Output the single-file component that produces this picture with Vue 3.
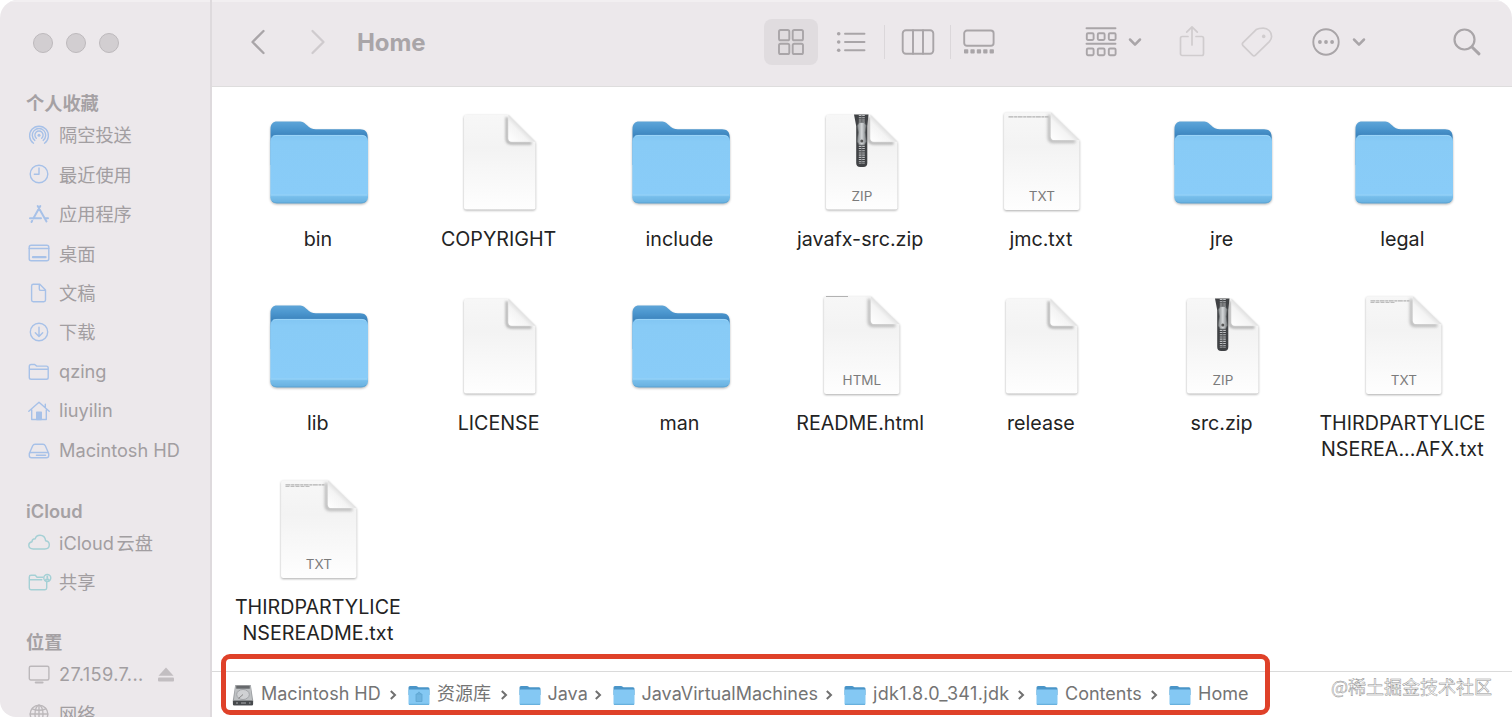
<template>
  <div class="window">
    <svg class="defs" width="0" height="0" aria-hidden="true">
      <defs>
        <linearGradient id="folderBack" x1="0" y1="0" x2="0" y2="1">
          <stop offset="0" stop-color="#5ea5d8" />
          <stop offset="0.16" stop-color="#4c97cf" />
          <stop offset="0.3" stop-color="#3f87c0" />
          <stop offset="1" stop-color="#4794cf" />
        </linearGradient>
        <linearGradient id="folderFront" x1="0" y1="0" x2="0" y2="1">
          <stop offset="0" stop-color="#82c6f3" />
          <stop offset="0.1" stop-color="#88cbf6" />
          <stop offset="0.86" stop-color="#89ccf8" />
          <stop offset="0.91" stop-color="#76bdea" />
          <stop offset="1" stop-color="#68b0df" />
        </linearGradient>
        <linearGradient id="paper" x1="0" y1="0" x2="0" y2="1">
          <stop offset="0" stop-color="#f7f7f7" />
          <stop offset="0.35" stop-color="#f3f3f3" />
          <stop offset="1" stop-color="#fefefe" />
        </linearGradient>
        <linearGradient id="fold" x1="0" y1="1" x2="1" y2="0">
          <stop offset="0" stop-color="#ffffff" />
          <stop offset="0.38" stop-color="#f4f4f4" />
          <stop offset="0.52" stop-color="#dedede" />
        </linearGradient>
        <linearGradient id="pull" x1="0" y1="0" x2="1" y2="0">
          <stop offset="0" stop-color="#85898b" />
          <stop offset="0.5" stop-color="#d4d7d9" />
          <stop offset="1" stop-color="#777b7e" />
        </linearGradient>
        <filter id="soft" x="-20%" y="-20%" width="140%" height="140%">
          <feGaussianBlur stdDeviation="1.3" />
        </filter>
      </defs>
    </svg>

    <aside class="sidebar">
      <div class="lights"><i></i><i></i><i></i></div>
      <section v-for="group in groups" :key="group.title" class="group">
        <h3>{{ group.title }}</h3>
        <div v-for="item in group.items" :key="item.name" class="side-row" :class="group.tone">
          <svg class="side-icon" viewBox="0 0 24 24" v-html="sideIcons[item.icon]"></svg>
          <span class="side-name" :class="{ wide: item.eject, mixed: item.icon === 'cloud' }">{{ item.name }}</span>
          <svg v-if="item.eject" class="eject" viewBox="0 0 16 15">
            <path d="M8 0.5 15.5 8.8H.5z" /><rect x="0" y="10.5" width="16" height="4" rx="1" />
          </svg>
        </div>
      </section>
    </aside>

    <main class="main">
      <header class="toolbar">
        <svg class="back" viewBox="0 0 16 26"><path d="M13.5 2 2.5 13l11 11" /></svg>
        <svg class="forward" viewBox="0 0 16 26"><path d="M2.5 2l11 11-11 11" /></svg>
        <h1>Home</h1>
        <div class="views">
          <div class="view active">
            <svg width="28" height="28" viewBox="0 0 28 28">
              <rect x="2" y="2" width="10.3" height="10.3" rx="1.6" /><rect x="15.7" y="2" width="10.3" height="10.3" rx="1.6" />
              <rect x="2" y="15.7" width="10.3" height="10.3" rx="1.6" /><rect x="15.7" y="15.7" width="10.3" height="10.3" rx="1.6" />
            </svg>
          </div>
          <div class="view list">
            <svg width="30" height="22" viewBox="0 0 30 22">
              <path d="M9 2.7h19.5M9 11h19.5M9 19.3h19.5" />
              <g class="solid"><circle cx="2.7" cy="2.7" r="1.8" /><circle cx="2.7" cy="11" r="1.8" /><circle cx="2.7" cy="19.3" r="1.8" /></g>
            </svg>
          </div>
          <i class="divider"></i>
          <div class="view columns">
            <svg width="34" height="28" viewBox="0 0 34 28"><rect x="1.7" y="2.2" width="30.6" height="23.6" rx="3.2" /><path d="M12 2.2v23.6M22 2.2v23.6" /></svg>
          </div>
          <i class="divider"></i>
          <div class="view gallery">
            <svg width="34" height="28" viewBox="0 0 34 28">
              <rect x="2.2" y="2.5" width="29.4" height="15.3" rx="2.8" />
              <g class="solid"><rect v-for="n in 5" :key="n" :x="n * 6.4 - 4.4" y="21.2" width="4.3" height="4.3" rx="0.8" /></g>
            </svg>
          </div>
        </div>
        <svg class="tool group-by" viewBox="0 0 32 32">
          <path d="M1.5 2.2h29M1.5 17.8h29" />
          <template v-for="n in 3" :key="n">
            <rect :x="n * 11 - 9.2" y="7.2" width="6.8" height="6.8" rx="1.2" />
            <rect :x="n * 11 - 9.2" y="22.5" width="6.8" height="6.8" rx="1.2" />
          </template>
        </svg>
        <svg class="tool chevron" viewBox="0 0 14 10"><path d="M2 2.5 7 7.6l5-5.1" /></svg>
        <svg class="tool share" viewBox="0 0 28 34"><path d="M10 11.5H4.2a1.7 1.7 0 0 0-1.7 1.7v15.6a1.7 1.7 0 0 0 1.7 1.7h19.6a1.7 1.7 0 0 0 1.7-1.7V13.2a1.7 1.7 0 0 0-1.7-1.7H18M14 20V2.2M8.7 7.2 14 1.8l5.3 5.4" /></svg>
        <svg class="tool tag" viewBox="0 0 34 34">
          <path d="M16.2 4.6 3 17.6c-.9 1-.9 2 0 3l9.5 9.6c1 .9 2 .9 3 0l13.6-13.4c1.6-1.7 2.5-3.3 2.5-5.4 0-4.8-3.8-8.2-8.4-8.2-2.8 0-5 .3-7 1.4z" />
          <circle class="dot" cx="23.7" cy="11.4" r="1.8" />
        </svg>
        <svg class="tool more" viewBox="0 0 30 30">
          <circle cx="15" cy="15" r="12.7" />
          <g class="solid"><circle cx="8.9" cy="15" r="1.9" /><circle cx="15" cy="15" r="1.9" /><circle cx="21.1" cy="15" r="1.9" /></g>
        </svg>
        <svg class="tool chevron second" viewBox="0 0 14 10"><path d="M2 2.5 7 7.6l5-5.1" /></svg>
        <svg class="tool search" viewBox="0 0 30 30"><circle cx="12.5" cy="12.5" r="10" /><path class="handle" d="M20 20l7 6.8" /></svg>
      </header>

      <div class="files">
        <div v-for="file in files" :key="file.id" class="file">
          <svg v-if="file.kind === 'folder'" class="file-icon folder" viewBox="0 0 110 110">
            <path d="M6.500 24c0-5 2.500-7.500 6.500-7.500h22c4 0 5.500 1.500 8 3.800 2.600 2.600 5 4 9 4h44c5 0 7.700 2.700 7.700 7.700V60H6.500z" fill="url(#folderBack)" />
            <rect x="6.300" y="30" width="97.700" height="68.300" rx="6" fill="url(#folderFront)" />
            <path d="M9 31.200q2-.8 4-.8h84.500q3 0 4.500 1.600" stroke="#a9dcfb" stroke-width="0.700" fill="none" />
            <path d="M7 90h96.300" stroke="#a1d9fb" stroke-width="0.800" />
            <path d="M8 96.300q2 1.600 5 1.600h84q3 0 5-1.600" stroke="#5ba2d1" stroke-width="0.800" fill="none" />
          </svg>
          <svg v-else class="file-icon" viewBox="0 0 110 110">
            <g :transform="sheetTransform(file)">
              <path class="sheet" d="M21 9.500h42.500L91 36.500v66q0 2-2 2H20.500q-2 0-2-2V12q0-2.500 2.500-2.500z" fill="url(#paper)" />
              <path d="M62 12v21.500q0 4.500 4.500 4.500H87" stroke="#777" stroke-opacity="0.5" stroke-width="3" fill="none" filter="url(#soft)" />
              <path d="M63.500 9.500V33q0 3.500 3.500 3.500h24z" fill="url(#fold)" />
            </g>
            <path v-if="file.lines" :d="`M21.500 11.800h${file.lines}`" stroke="#b2b2b2" stroke-width="1.300" stroke-dasharray="5 0.600 3 0.500" />
            <path v-if="file.lines === 39" d="M21.500 13.500h25" stroke="#bdbdbd" stroke-width="1" stroke-dasharray="4 1" />
            <path v-if="file.htmlLine" d="M19 7.500h22" stroke="#aaa" stroke-width="0.900" />
            <g v-if="file.ext === 'ZIP'">
              <path d="M47 9.500h14.500L60.300 21v37q0 4-4 4h-3.100q-4 0-4-4V21z" fill="#404245" />
              <path d="M54.800 10v49" stroke="#bfc1c3" stroke-width="6" stroke-dasharray="1.100 1.100" />
              <path d="M54.800 10v49" stroke="#606265" stroke-width="0.900" />
              <path d="M52.300 17.500h5l1.900 3-1 7 1.200 9-2.100 3.500h-5l-2.100-3.500 1.200-9-1-7z" fill="url(#pull)" stroke="#66696c" stroke-width="0.600" />
              <circle cx="54.800" cy="36" r="1.500" fill="#555" />
            </g>
            <text v-if="file.ext" x="54.900" y="95.500" text-anchor="middle">{{ file.ext }}</text>
          </svg>
          <div class="file-name">
            <span v-for="line in file.name" :key="line">{{ line }}</span>
          </div>
        </div>
      </div>

      <footer class="pathbar">
        <div v-for="(part, i) in crumbs" :key="part.name" class="crumb">
          <svg v-if="i === 0" class="crumb-icon" viewBox="0 0 22 24">
            <path d="M3.200 2h15.600l2.400 15.500V21q0 1.500-1.500 1.500H2.300Q.8 22.500.8 21v-3.500z" fill="#9b9ea1" />
            <path d="M3.700 2.500h14.600l1.800 14.700H1.900z" fill="#bdc0c2" />
            <rect x="4.200" y="2.700" width="13.600" height="3" fill="#66696c" />
            <ellipse cx="11" cy="11.500" rx="6.300" ry="5" fill="#cfd1d3" stroke="#989b9e" stroke-width="0.800" />
            <path d="M11 11.500l-4.500 4" stroke="#888" />
            <rect x="1" y="17.700" width="20" height="4.600" rx="0.800" fill="#46494c" />
            <path d="M4 20h2M9 20h5M17 20h1.500" stroke="#a9acae" />
          </svg>
          <svg v-else class="crumb-icon" viewBox="0 0 22 24">
            <path d="M.5 4.500Q.5 3 2 3h6q1 0 1.700.7l.8.600H20q1.500 0 1.500 1.500V12H.5z" fill="#4a95c8" />
            <rect x=".5" y="6.500" width="21" height="15.500" rx="1.300" fill="#84c8f3" />
            <path d="M1 21.300h20" stroke="#62aad8" />
            <path v-if="i === 1" d="M8 11h6v7.500H8zM9 11l2-2.200 2 2.200" fill="#6eb4e0" stroke="#5ea4d0" stroke-width="0.800" />
          </svg>
          <span class="crumb-name" :class="{ spaced: i === 4 }" :style="{ width: part.width + 'px' }">{{ part.name }}</span>
          <svg v-if="i < crumbs.length - 1" class="sep" viewBox="0 0 8 12"><path d="M1.800 2 6 6 1.800 10" /></svg>
        </div>
      </footer>
    </main>

    <div class="highlight"></div>
    <div class="watermark">@稀土掘金技术社区</div>
  </div>
</template>

<script setup>
const groups = [
  {
    title: '个人收藏',
    tone: 'blue',
    items: [
      { name: '隔空投送', icon: 'airdrop' },
      { name: '最近使用', icon: 'clock' },
      { name: '应用程序', icon: 'apps' },
      { name: '桌面', icon: 'desktop' },
      { name: '文稿', icon: 'doc' },
      { name: '下载', icon: 'download' },
      { name: 'qzing', icon: 'folder' },
      { name: 'liuyilin', icon: 'house' },
      { name: 'Macintosh HD', icon: 'disk' }
    ]
  },
  {
    title: 'iCloud',
    tone: 'teal',
    items: [
      { name: 'iCloud 云盘', icon: 'cloud' },
      { name: '共享', icon: 'shared' }
    ]
  },
  {
    title: '位置',
    tone: 'gray',
    items: [
      { name: '27.159.7...', icon: 'display', eject: true },
      { name: '网络', icon: 'globe' }
    ]
  }
]

const sideIcons = {
  airdrop: '<path d="M6.500 20.200A9.400 9.400 0 1 1 17.500 20.200M7.800 17.400A6.700 6.700 0 1 1 16.200 17.400M9.300 15.200A4.100 4.100 0 1 1 14.700 15.200"/><circle cx="12" cy="12.300" r="1.500" fill="currentColor" stroke="none"/>',
  clock: '<circle cx="12" cy="12" r="8.800"/><path d="M12 6v6.200H7.300"/>',
  apps: '<path d="M13.300 4 6.300 16.500M10.700 4l8.800 15.500M3 16.300h11M17.500 16.300H21M5.200 18.800l-.7 1.200" stroke-width="2"/>',
  desktop: '<rect x="2.200" y="4.200" width="19.600" height="15.600" rx="2"/><path d="M2.200 7.500h19.600"/><path d="M6 16.200h12.500" stroke-width="2.300"/>',
  doc: '<path d="M6.300 3.200h6.500l5.700 5.900v10q0 1.700-1.700 1.700H6.300q-1.700 0-1.700-1.700V4.900q0-1.700 1.700-1.700zM12.300 3.500v4.400q0 1.500 1.500 1.500h4.500"/>',
  download: '<circle cx="12" cy="12" r="8.700"/><path d="M12 7.200v9M8.300 12.700l3.700 3.700 3.700-3.700"/>',
  folder: '<path d="M2.300 17.500V6.300q0-1.800 1.800-1.800h3.600l2 1.600h9.700q1.800 0 1.800 1.800v9.600q0 1.800-1.800 1.800H4.100q-1.800 0-1.800-1.800zM2.300 9.300h18.900"/>',
  house: '<path d="M1.800 12.200 12 3.200l10.200 9M4.700 10.500V20.500h14.600V10.500M18.300 8.500V5.300"/><path d="M9.700 20.500v-7.300h4.600v7.300z" fill="currentColor"/>',
  disk: '<path d="M2.300 14.500 5.700 6.800q.7-1.500 2.300-1.500h8q1.600 0 2.300 1.500l3.400 7.700v1.900q0 2.300-2.300 2.300H4.600q-2.300 0-2.300-2.300zM2.300 14.500q0-1 2.300-1h14.800q2.300 0 2.300 1"/><path d="M9.500 16.200h9" stroke-width="1.600" stroke-dasharray="1.500 .7"/>',
  cloud: '<path d="M6.300 18Q1.800 18 1.800 14.300q0-2.900 3.200-3.500 0-3 3.200-3 .9-3.500 4.800-3.500 5 0 5.600 5.400 3.700.6 3.700 4.100 0 4.200-4.500 4.200z"/>',
  shared: '<path d="M16 7.200H10L8.300 5.300H4Q2.300 5.300 2.300 7v11q0 1.700 1.700 1.700h14q1.700 0 1.700-1.700v-6M2.300 9.800h12.500"/><circle cx="20.300" cy="8" r="3.500"/><path d="M18.300 10.300q2-2 4 0M20.300 6.500v1" stroke-width="1.800"/>',
  display: '<rect x="2.300" y="4.200" width="19.600" height="13.800" rx="1.500"/><path d="M8.800 20.500h6.700" stroke-width="2.200"/>',
  globe: '<circle cx="12" cy="12" r="8.800"/><ellipse cx="12" cy="12" rx="4" ry="8.800"/><path d="M12 3.200v17.600M3.200 12h17.600M5.200 6.800q6.800 3 13.600 0"/>'
}

const files = [
  { id: 1, name: ['bin'], kind: 'folder' },
  { id: 2, name: ['COPYRIGHT'], kind: 'doc' },
  { id: 3, name: ['include'], kind: 'folder' },
  { id: 4, name: ['javafx-src.zip'], kind: 'doc', ext: 'ZIP' },
  { id: 5, name: ['jmc.txt'], kind: 'doc', ext: 'TXT', tall: true, lines: 40 },
  { id: 6, name: ['jre'], kind: 'folder' },
  { id: 7, name: ['legal'], kind: 'folder' },
  { id: 8, name: ['lib'], kind: 'folder' },
  { id: 9, name: ['LICENSE'], kind: 'doc' },
  { id: 10, name: ['man'], kind: 'folder' },
  { id: 11, name: ['README.html'], kind: 'doc', ext: 'HTML', tall: true, htmlLine: true },
  { id: 12, name: ['release'], kind: 'doc' },
  { id: 13, name: ['src.zip'], kind: 'doc', ext: 'ZIP' },
  { id: 14, name: ['THIRDPARTYLICE', 'NSEREA...AFX.txt'], kind: 'doc', ext: 'TXT', tall: true, lines: 39 },
  { id: 15, name: ['THIRDPARTYLICE', 'NSEREADME.txt'], kind: 'doc', ext: 'TXT', tall: true, lines: 39 }
]

const crumbs = [
  { name: 'Macintosh HD', width: 121 },
  { name: '资源库', width: 55.5 },
  { name: 'Java', width: 39 },
  { name: 'JavaVirtualMachines', width: 176.5 },
  { name: 'jdk1.8.0_341.jdk', width: 137 },
  { name: 'Contents', width: 78 },
  { name: 'Home', width: 50 }
]

// previews with a text extract sit on a slightly larger sheet
const sheetTransform = (file) =>
  file.tall ? 'translate(-2.2 -2.6) scale(1.04 1.03)' : 'translate(0.8 0.4) scale(0.985 0.995)'
</script>

<style>
body { background: #fff; overflow: hidden; }
</style>

<style scoped>
.window { position: relative; display: flex; width: 1512px; height: 717px; overflow: hidden; border-radius: 18px 18px 0 16px; background: #fff; font-family: Inter, "Noto Sans CJK SC", sans-serif; }
.defs { position: absolute; }

.sidebar { box-sizing: border-box; width: 212px; height: 717px; flex-shrink: 0; overflow: hidden; background: #ece8eb; border-right: 2px solid #dedadd; padding-left: 26px; box-shadow: inset 0 2px 0 #f2eff1; }
.lights { display: flex; gap: 13px; padding: 33px 0 0 7px; height: 56px; }
.lights i { box-sizing: border-box; width: 20px; height: 20px; border-radius: 50%; background: #d2ced1; border: 1px solid #bdb9bc; }
.group { margin-bottom: 26.5px; }
.group h3 { margin: 0; padding-top: 1px; box-sizing: border-box; height: 26.3px; line-height: 26px; font-size: 18.2px; font-weight: 600; color: #a5a1a4; }
.side-row { display: flex; align-items: center; height: 39.45px; color: #a7c1e8; }
.side-row.teal { color: #a5d0d5; }
.side-row.gray { color: #bcb8bb; }
.side-icon { width: 24px; height: 24px; margin-left: 1px; fill: none; stroke: currentColor; stroke-width: 1.4; stroke-linejoin: round; stroke-linecap: round; flex-shrink: 0; overflow: visible; }
.side-name { margin: 0 0 1.5px 8px; font-size: 18.2px; color: #a29ea1; white-space: nowrap; }
.side-name.wide { letter-spacing: 0.35px; }
.side-name.mixed { word-spacing: -2.5px; }
.eject { width: 16px; height: 15px; margin-left: 14px; fill: #c2bec1; }

.main { flex: 1; display: flex; flex-direction: column; min-width: 0; }
.toolbar { box-sizing: border-box; display: flex; align-items: center; height: 87px; padding: 0 0 3px 38px; background: #ece8eb; border-bottom: 1px solid #dedddd; box-shadow: inset 0 2px 0 #f2eff1; }
.toolbar svg { flex-shrink: 0; fill: none; stroke: #a9a5a8; stroke-width: 1.9; stroke-linecap: round; stroke-linejoin: round; }
.toolbar .solid { fill: #a9a5a8; stroke: none; }
.toolbar .back { width: 16px; height: 26px; stroke-width: 2.3; }
.toolbar .forward { width: 16px; height: 26px; margin-left: 44px; stroke: #cfcbce; stroke-width: 2.3; }
.toolbar h1 { margin: 1px 0 0 31px; width: 69px; font-size: 24px; font-weight: 700; color: #a9a5a8; letter-spacing: -0.1px; }
.views { display: flex; align-items: center; margin-left: 338px; }
.view { display: flex; align-items: center; justify-content: center; }
.view.active { width: 54px; height: 46px; border-radius: 8px; background: #e0dcdf; }
.view.list { width: 66px; }
.view.columns { width: 65px; }
.view.gallery { width: 56px; }
.divider { width: 1px; height: 34px; background: #dbd7da; }
.toolbar .group-by { width: 32px; height: 32px; margin-left: 78px; }
.toolbar .chevron { width: 14px; height: 10px; margin: 1px 0 0 11px; stroke-width: 2.5; }
.toolbar .share { width: 28px; height: 34px; margin-left: 36px; stroke: #d0ccce; stroke-width: 1.7; }
.toolbar .tag { width: 34px; height: 34px; margin-left: 34px; stroke: #d0ccce; stroke-width: 1.7; }
.toolbar .tag .dot { fill: #d0ccce; stroke: none; }
.toolbar .more { width: 30px; height: 30px; margin-left: 37px; }
.toolbar .chevron.second { margin-left: 11px; }
.toolbar .search { width: 30px; height: 30px; margin-left: 86px; stroke-width: 2.2; }
.toolbar .handle { stroke-width: 3; }

.files { flex: 1; display: grid; grid-template-columns: repeat(7, 180.75px); grid-auto-rows: 184px; padding: 18px 0 0 16px; align-content: start; min-height: 0; }
.file { display: flex; flex-direction: column; align-items: center; }
.file-icon { width: 110px; height: 110px; margin-left: 2px; overflow: visible; }
.file-icon.folder { filter: drop-shadow(0 1px 1px rgba(0, 0, 0, 0.28)); }
.sheet { filter: drop-shadow(0 1px 1px rgba(0, 0, 0, 0.32)); }
.file-icon text { font-size: 13.5px; fill: #7b7b7b; }
.file-name { display: flex; flex-direction: column; align-items: center; margin: 10.5px 1px 0 0; font-size: 19.7px; line-height: 26.3px; color: #232323; white-space: nowrap; }

.pathbar { box-sizing: border-box; display: flex; align-items: center; height: 46px; border-top: 1px solid #dadada; padding-left: 20px; }
.crumb { display: flex; align-items: center; height: 24px; }
.crumb-icon { width: 22px; height: 24px; }
.crumb-name { margin: 0 0 1px 7px; font-size: 18px; line-height: 24px; color: #747474; white-space: nowrap; }
.crumb-name.spaced { letter-spacing: 0.35px; }
.sep { width: 8px; height: 12px; margin: 1px 11px 0 7px; fill: none; stroke: #707070; stroke-width: 2; }

/* annotation frame drawn over the path bar */
.highlight { position: absolute; box-sizing: border-box; left: 221px; top: 654px; width: 1049px; height: 61px; border: 5px solid #df4129; border-radius: 9px; }
.watermark { position: absolute; right: 20px; top: 673px; font-size: 18px; line-height: 26px; font-family: "Noto Sans CJK SC", sans-serif; color: #fff; -webkit-text-stroke: 0.5px #8f8f8f; }
</style>
